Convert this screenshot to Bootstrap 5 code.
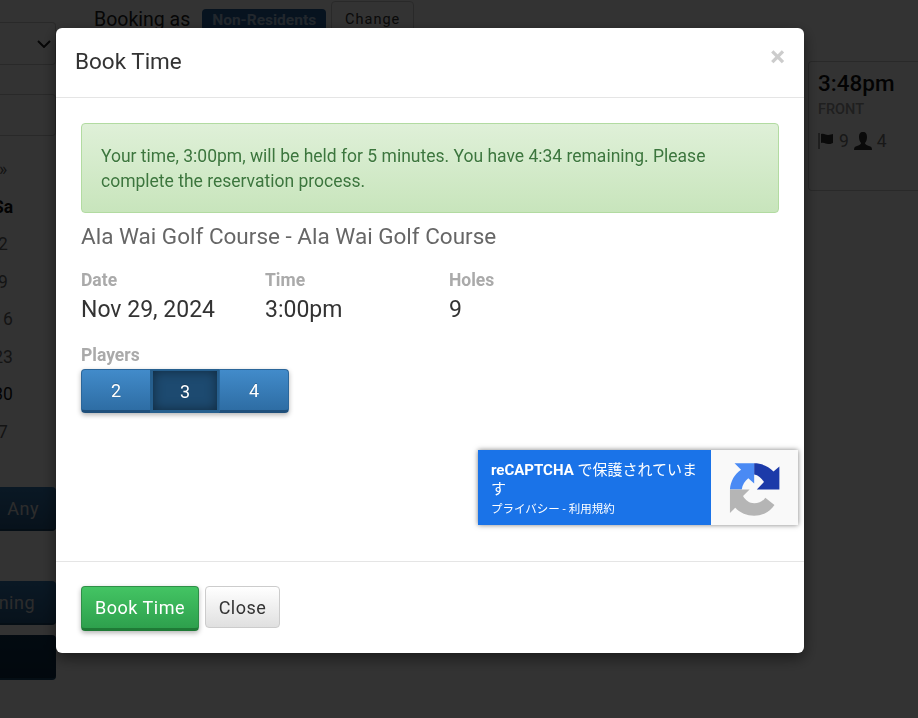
<!DOCTYPE html>
<html lang="en">
<head>
  <meta charset="UTF-8" />
  <meta name="viewport" content="width=device-width, initial-scale=1.0"/>
  <title>Book Time</title>
  <link href="https://cdn.jsdelivr.net/npm/bootstrap@5.3.0/dist/css/bootstrap.min.css" rel="stylesheet" />
  <style>
    body {
      font-family: Roboto, "Noto Sans CJK JP", sans-serif;
      height: 718px;
      overflow: hidden;
      background: #fff;
    }
    /* page behind the dialog */
    .page-wrap { height: 718px; }
    .side-col { width: 56px; flex: none; overflow: hidden; }
    .side-select {
      height: 43px; margin-top: 22px; border: 1px solid #ccc; border-left: 0;
      border-radius: 0 4px 4px 0; display: flex; justify-content: flex-end; align-items: center; padding-right: 4px;
    }
    .side-input { height: 42px; margin-top: 29px; margin-bottom: 15px; border: 1px solid #ccc; border-left: 0; border-radius: 0 4px 4px 0; }
    .cal-text { width: 60px; margin-left: -27px; text-align: center; font-size: 17.5px; color: #666; line-height: 37.5px; white-space: nowrap; }
    .cal-strong { color: #111; }
    .side-btn {
      height: 44px; border-radius: 0 4px 4px 0; color: #ddd; font-size: 18px; letter-spacing: .5px;
      background: linear-gradient(#337ab7, #265a88); border-bottom: 2px solid #1b4569;
      display: flex; justify-content: flex-end; align-items: center; white-space: nowrap;
    }
    .side-any { margin-top: 36px; padding-right: 17px; }
    .side-morning { margin-top: 50px; padding-right: 21px; }
    .side-dark { margin-top: 10px; height: 45px; background: linear-gradient(#0f3554, #0a2a44); }
    .main-col { padding-left: 38px; padding-top: 1px; width: 752px; flex: none; }
    .booking-line { font-size: 19.5px; color: #222; line-height: 30px; }
    .type-tag { background: #245e9c; color: #a9c4de; font-weight: 700; font-size: 15.5px; line-height: 22px; padding: 0 10px; border-radius: 4px; margin-left: 12px; }
    .change-tag { border: 1px solid #ccc; border-radius: 4px; font-size: 14.5px; letter-spacing: 1px; line-height: 20px; padding: 8px 13px; color: #333; margin-left: 5px; }
    .slot-box { margin-top: 61px; border: 1px solid #ccc; border-right: 0; border-radius: 4px 0 0 4px; height: 130px; padding: 7px 9px; width: 110px; white-space: nowrap; }
    .slot-time { font-size: 22.5px; font-weight: 500; color: #111; line-height: 28px; }
    .slot-front { font-size: 14.5px; font-weight: 500; color: #999; line-height: 16px; margin-top: 5px; }
    .slot-meta { font-size: 17.5px; color: #777; margin-top: 11px; line-height: 24px; }

    /* dialog */
    .modal-backdrop.show { opacity: .8; }
    .book-dialog { width: 748px; max-width: none; margin: 28px 0 0 56px; }
    .book-dialog .modal-content { border: 0; border-radius: 6px; box-shadow: 0 5px 15px rgba(0,0,0,.5); }
    .book-dialog .modal-header { height: 70px; padding: 0 19px; border-bottom: 1px solid #e5e5e5; align-items: center; }
    .book-dialog .modal-title { font-size: 22.5px; font-weight: 400; color: #333; line-height: 1.2; margin-top: -2px; }
    .close-x { font-size: 28px; font-weight: 700; color: #ccc; background: none; border: 0; padding: 0; line-height: 1; margin-top: -11px; margin-right: 0; text-shadow: 0 1px 0 #fff; }
    .book-dialog .modal-body { padding: 25px; height: 463px; }
    .hold-alert {
      height: 90px; margin: 0 0 8px; padding: 20px 19px; border: 1px solid #b2dba1; border-radius: 4px; color: #3c763d;
      background: linear-gradient(#dff0d8, #c8e5bc); font-size: 17.5px; line-height: 25px; text-shadow: 0 1px 0 rgba(255,255,255,.2);
    }
    .course-name { font-size: 22.5px; color: #666; line-height: 30px; margin-bottom: 17px; }
    .info-col { width: 184px; }
    .info-label { font-size: 17.5px; font-weight: 700; color: #aaa; line-height: 24px; }
    .info-value { font-size: 23px; color: #333; line-height: 31px; margin-top: 2px; }
    .players-wrap { margin-top: 18px; }
    .players-group { box-shadow: 0 2px 5px rgba(0,0,0,.3); border-radius: 4px; margin-top: 2px; }
    .player-btn {
      width: 70px; height: 44px; padding: 1px 0 0; font-size: 18px; color: #fff; border: 1px solid #2b669a; border-bottom: 3px solid #1f4f7a;
      background: linear-gradient(#428bca, #2e6da4); border-radius: 0; text-shadow: 0 -1px 0 rgba(0,0,0,.2);
    }
    .player-btn:first-child { border-radius: 4px 0 0 4px; }
    .player-btn:last-child { border-radius: 0 4px 4px 0; }
    .player-btn.is-on { background: #1d4a70; box-shadow: inset 0 0 12px rgba(0,0,0,.45); border-width: 2px 3px; border-color: #265f8e; border-bottom: 3px solid #265f8e; }
    .captcha-row { margin-top: 37px; margin-right: -19px; }
    .captcha-box { width: 320px; height: 75px; display: flex; box-shadow: 0 0 5px rgba(0,0,0,.5); }
    .captcha-text { width: 233px; background: #1a73e8; color: #fff; padding: 11px 13px; font-size: 15px; line-height: 19px; }
    .captcha-text b { font-weight: 700; }
    .captcha-links { font-size: 11.5px; line-height: 16px; margin-top: 2px; white-space: nowrap; }
    .captcha-logo { flex: 1; background: #f9f9f9; display: flex; align-items: center; justify-content: center; padding-top: 3px; }
    .book-dialog .modal-footer { height: 92px; padding: 24px 25px 0; justify-content: flex-start; align-items: flex-start; gap: 6px; border-top: 1px solid #e5e5e5; }
    .book-dialog .modal-footer > .btn { margin: 0; }
    .btn-book {
      width: 118px; height: 45px; padding: 0 0 1px; color: #fff; font-size: 18px; letter-spacing: .5px; border: 1px solid #2e8f47; border-bottom: 3px solid #1f7a36;
      background: linear-gradient(#43c463, #2ea04d); border-radius: 4px; box-shadow: 0 2px 5px rgba(0,0,0,.3);
    }
    .btn-shut {
      width: 75px; height: 42px; padding: 0; color: #333; font-size: 18px; letter-spacing: .5px; border: 1px solid #ccc;
      background: linear-gradient(#fff, #e0e0e0); border-radius: 4px;
    }
  </style>
</head>
<body>
  <div class="page-wrap d-flex">
    <div class="side-col">
      <div class="side-select">
        <svg width="14" height="8" viewBox="0 0 14 8"><path d="M1 1l6 6 6-6" fill="none" stroke="#222" stroke-width="2"/></svg>
      </div>
      <div class="side-input"></div>
      <div class="cal-text">»</div>
      <div class="cal-text cal-strong fw-bold">Sa</div>
      <div class="cal-text">2</div>
      <div class="cal-text">9</div>
      <div class="cal-text">16</div>
      <div class="cal-text">23</div>
      <div class="cal-text cal-strong">30</div>
      <div class="cal-text">7</div>
      <div class="side-btn side-any">Any</div>
      <div class="side-btn side-morning">ning</div>
      <div class="side-btn side-dark"></div>
    </div>
    <div class="main-col">
      <div class="booking-line d-flex align-items-center">
        Booking as <span class="type-tag">Non-Residents</span><span class="change-tag">Change</span>
      </div>
    </div>
    <div class="flex-grow-1 overflow-hidden">
      <div class="slot-box">
        <div class="slot-time">3:48pm</div>
        <div class="slot-front">FRONT</div>
        <div class="slot-meta d-flex align-items-center">
          <svg width="17" height="18" viewBox="0 0 17 18"><path d="M1 1v16" stroke="#333" stroke-width="1"/><path d="M3 2c3-1 5 1 7 1s4-1 5-1v9c-2 1-3 1-5 1s-4-2-7-1z" fill="#333"/></svg>
          <span class="ms-1 me-1">9</span>
          <svg width="20" height="18" viewBox="0 0 20 18"><path d="M10 0c3 0 4 2 4 5s-1 5-2 6c0 1 1 2 4 3 2 .6 3 1 3 4H1c0-3 1-3.400 3-4 3-1 4-2 4-3-1-1-2-3-2-6s1-5 4-5z" fill="#333"/></svg>
          <span class="ms-1">4</span>
        </div>
      </div>
    </div>
  </div>

  <div class="modal-backdrop show"></div>

  <div class="modal show d-block" tabindex="-1">
    <div class="modal-dialog book-dialog">
      <div class="modal-content">
        <div class="modal-header">
          <h4 class="modal-title">Book Time</h4>
          <button type="button" class="close-x ms-auto">×</button>
        </div>
        <div class="modal-body">
          <div class="alert hold-alert">Your time, 3:00pm, will be held for 5 minutes. You have 4:34 remaining. Please complete the reservation process.</div>
          <div class="course-name">Ala Wai Golf Course - Ala Wai Golf Course</div>
          <div class="d-flex">
            <div class="info-col"><div class="info-label">Date</div><div class="info-value">Nov 29, 2024</div></div>
            <div class="info-col"><div class="info-label">Time</div><div class="info-value">3:00pm</div></div>
            <div class="info-col"><div class="info-label">Holes</div><div class="info-value">9</div></div>
          </div>
          <div class="players-wrap">
            <div class="info-label">Players</div>
            <div class="btn-group players-group">
              <button type="button" class="btn player-btn">2</button>
              <button type="button" class="btn player-btn is-on">3</button>
              <button type="button" class="btn player-btn">4</button>
            </div>
          </div>
          <div class="captcha-row d-flex justify-content-end">
            <div class="captcha-box">
              <div class="captcha-text">
                <div><b>reCAPTCHA</b> で保護されています</div>
                <div class="captcha-links">プライバシー - 利用規約</div>
              </div>
              <div class="captcha-logo">
                <svg width="53" height="55" viewBox="40 34 158 168">
                  <path d="M58 38H118V100L100 84C90 92 82 104 80 118H44C46 92 58 72 78 58Z" fill="#4a8af4"/>
                  <path d="M118 38C142 38 162 47 177 63L195 48V118H126L148 95C140 82 130 74 118 72Z" fill="#1c3aa9"/>
                  <path d="M44 118H104L84 138C92 152 104 160 118 160C132 160 144 155 152 143L180 165C165 187 143 198 118 198C95 198 75 189 60 174L44 190Z" fill="#b5b5b5"/>
                </svg>
              </div>
            </div>
          </div>
        </div>
        <div class="modal-footer">
          <button type="button" class="btn btn-book">Book Time</button>
          <button type="button" class="btn btn-shut">Close</button>
        </div>
      </div>
    </div>
  </div>

  <script src="https://cdn.jsdelivr.net/npm/bootstrap@5.3.0/dist/js/bootstrap.bundle.min.js"></script>
</body>
</html>
